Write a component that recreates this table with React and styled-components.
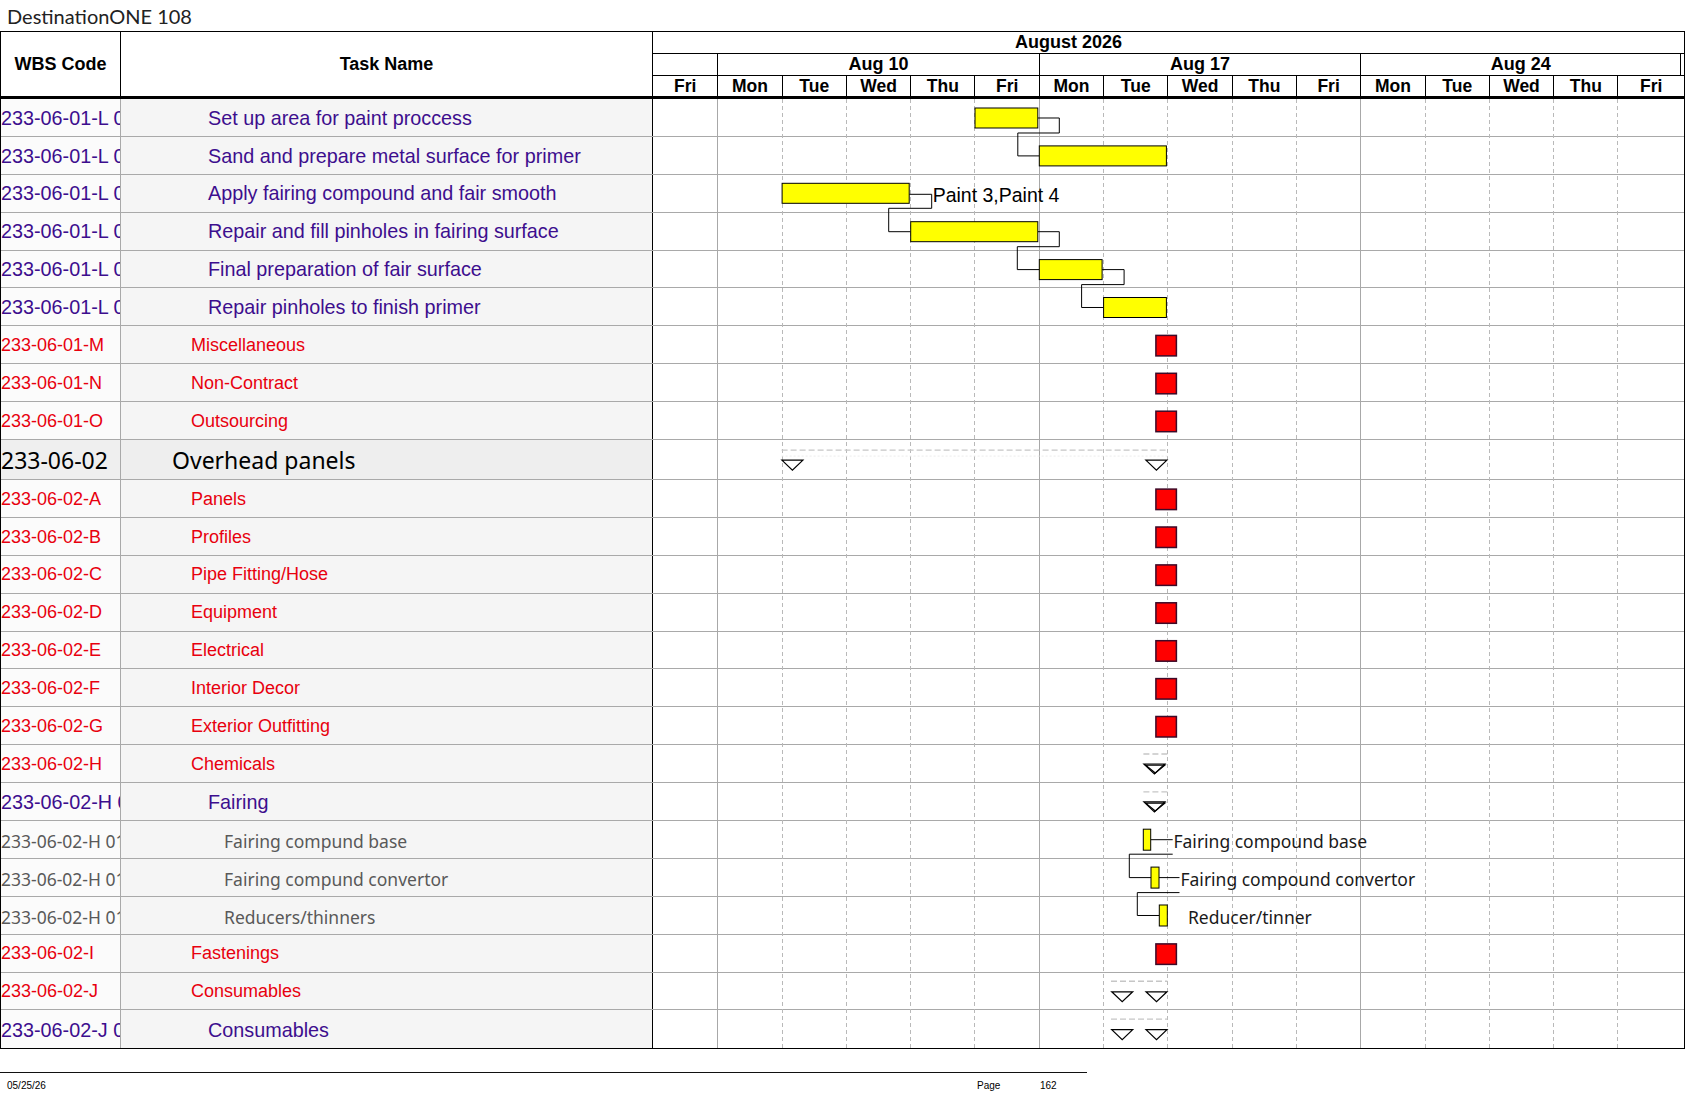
import React from 'react'
import styled, { createGlobalStyle, css } from 'styled-components'

const DW = 64.3
const RH = 37.9
const SUMMARY_H = 40
const CHART_W = 1031

const DAYS = ['Fri', 'Mon', 'Tue', 'Wed', 'Thu', 'Fri', 'Mon', 'Tue', 'Wed', 'Thu', 'Fri', 'Mon', 'Tue', 'Wed', 'Thu', 'Fri']
const WEEKS = [
  { label: '', days: 1 },
  { label: 'Aug 10', days: 5 },
  { label: 'Aug 17', days: 5 },
  { label: 'Aug 24', days: 5 },
]

const ROWS = [
  { wbs: '233-06-01-L 01', name: 'Set up area for paint proccess', kind: 'task' },
  { wbs: '233-06-01-L 02', name: 'Sand and prepare metal surface for primer', kind: 'task' },
  { wbs: '233-06-01-L 03', name: 'Apply fairing compound and fair smooth', kind: 'task' },
  { wbs: '233-06-01-L 04', name: 'Repair and fill pinholes in fairing surface', kind: 'task' },
  { wbs: '233-06-01-L 05', name: 'Final preparation of fair surface', kind: 'task' },
  { wbs: '233-06-01-L 06', name: 'Repair pinholes to finish primer', kind: 'task' },
  { wbs: '233-06-01-M', name: 'Miscellaneous', kind: 'cost' },
  { wbs: '233-06-01-N', name: 'Non-Contract', kind: 'cost' },
  { wbs: '233-06-01-O', name: 'Outsourcing', kind: 'cost' },
  { wbs: '233-06-02', name: 'Overhead panels', kind: 'summary' },
  { wbs: '233-06-02-A', name: 'Panels', kind: 'cost' },
  { wbs: '233-06-02-B', name: 'Profiles', kind: 'cost' },
  { wbs: '233-06-02-C', name: 'Pipe Fitting/Hose', kind: 'cost' },
  { wbs: '233-06-02-D', name: 'Equipment', kind: 'cost' },
  { wbs: '233-06-02-E', name: 'Electrical', kind: 'cost' },
  { wbs: '233-06-02-F', name: 'Interior Decor', kind: 'cost' },
  { wbs: '233-06-02-G', name: 'Exterior Outfitting', kind: 'cost' },
  { wbs: '233-06-02-H', name: 'Chemicals', kind: 'cost' },
  { wbs: '233-06-02-H 01', name: 'Fairing', kind: 'task' },
  { wbs: '233-06-02-H 01.1', name: 'Fairing compund base', kind: 'item' },
  { wbs: '233-06-02-H 01.2', name: 'Fairing compund convertor', kind: 'item' },
  { wbs: '233-06-02-H 01.3', name: 'Reducers/thinners', kind: 'item' },
  { wbs: '233-06-02-I', name: 'Fastenings', kind: 'cost' },
  { wbs: '233-06-02-J', name: 'Consumables', kind: 'cost' },
  { wbs: '233-06-02-J 01', name: 'Consumables', kind: 'task' },
]

// text look of each kind of row
const KIND = {
  task: { color: '#3d0e8e', font: '"Liberation Sans", Arial, sans-serif', size: 19.8, indent: 87, nudge: 1.5 },
  cost: { color: '#e8000e', font: '"Liberation Sans", Arial, sans-serif', size: 18, indent: 70, nudge: 1.5 },
  summary: { color: '#000', font: '"Noto Sans", "Open Sans", sans-serif', size: 23, indent: 51, nudge: 0 },
  item: { color: '#595959', font: '"Noto Sans", "Open Sans", sans-serif', size: 17.5, indent: 103, nudge: 2.5 },
}

const rowHeight = (r) => (r.kind === 'summary' ? SUMMARY_H : RH)
const TOPS = ROWS.reduce((acc, r, i) => {
  acc.push(i === 0 ? 0 : acc[i - 1] + rowHeight(ROWS[i - 1]))
  return acc
}, [])
const BODY_H = TOPS[TOPS.length - 1] + rowHeight(ROWS[ROWS.length - 1])

const d = (i) => i * DW
const COST_ROWS = [6, 7, 8, 10, 11, 12, 13, 14, 15, 16, 22]

const GlobalStyle = createGlobalStyle`
  html, body {
    margin: 0;
    padding: 0;
    background: #fff;
  }
  body {
    font-family: "Liberation Sans", Arial, sans-serif;
    color: #000;
  }
`

const App = () => {
  return (
    <Page>
      <GlobalStyle />
      <Title>DestinationONE 108</Title>
      <Sheet>
        <Header>
          <HeadCell $width={120}>WBS Code</HeadCell>
          <HeadCell $width={532}>Task Name</HeadCell>
          <ChartHead>
            <MonthBand>August 2026</MonthBand>
            <WeekBand>
              {WEEKS.map((w, i) => (
                <WeekCell key={i} $first={i === 0}>
                  {w.label}
                </WeekCell>
              ))}
            </WeekBand>
            <DayBand>
              {DAYS.map((day, i) => (
                <DayCell key={i} $first={i === 0}>
                  {day}
                </DayCell>
              ))}
            </DayBand>
          </ChartHead>
        </Header>

        <Body>
          {ROWS.map((r, i) => (
            <Row key={i} $summary={r.kind === 'summary'}>
              <WbsCell $kind={r.kind}>{r.wbs}</WbsCell>
              <TaskCell $kind={r.kind}>{r.name}</TaskCell>
              <ChartCell />
            </Row>
          ))}

          <ChartOverlay>
            <DayGrid>
              {DAYS.map((day, i) => (
                <DayLine key={i} $first={i === 0} $week={day === 'Mon'} />
              ))}
            </DayGrid>
            <GanttDrawing />
          </ChartOverlay>
        </Body>
      </Sheet>

      <Footer>
        <span>05/25/26</span>
        <span>Page</span>
        <span>162</span>
      </Footer>
    </Page>
  )
}

export default App

/**
 * Gantt drawing
 */

const Bar = ({ x1, x2, y, h = 20 }) => (
  <rect x={x1} y={y} width={x2 - x1} height={h} fill="#ffff00" stroke="#000" strokeWidth="1" />
)

const Milestone = ({ row }) => (
  <rect x={d(8) - 11.5} y={TOPS[row] + 9} width="20.5" height="20.5" fill="#ff0000" stroke="#3d0a28" strokeWidth="1.5" />
)

const Tri = ({ x, y, double }) => (
  <g fill="none" stroke="#000" strokeWidth="1.2">
    <polygon points={`${x},${y} ${x + 21},${y} ${x + 10.5},${y + 10}`} fill="#fff" />
    {double && <polygon points={`${x + 1.8},${y + 1.2} ${x + 21},${y + 1.2} ${x + 11.4},${y + 9}`} />}
  </g>
)

const Dash = ({ x1, x2, y }) => (
  <line x1={x1} x2={x2} y1={y} y2={y} stroke="#c6c6c6" strokeWidth="1.4" strokeDasharray="6 3" />
)

const Link = ({ pts }) => <path d={pts} fill="none" stroke="#000" strokeWidth="1" />

const link = (xa, ya, xDrop, yDown, xLeft, yb, xEnd) =>
  `M${xa} ${ya} H${xDrop} V${yDown} H${xLeft} V${yb} H${xEnd}`

const GanttDrawing = () => {
  const T = TOPS
  return (
    <ChartSvg width={CHART_W} height={BODY_H} viewBox={`0 0 ${CHART_W} ${BODY_H}`}>
      {/* paint tasks */}
      <Link pts={link(d(6) - 1, T[0] + 19, d(6) + 20.5, T[0] + 34, d(6) - 21, T[1] + 19, d(6) + 0.5)} />
      <Link pts={`M${d(4) - 1} ${T[2] + 19.5} H${d(4) + 21.5}`} />
      <Link pts={link(d(4) + 21.5, T[2] + 19.5, d(4) + 21.5, T[2] + 33.5, d(4) - 21.5, T[3] + 19, d(4) + 0.5)} />
      <Link pts={link(d(6) - 1, T[3] + 19, d(6) + 20.5, T[3] + 34, d(6) - 21.5, T[4] + 19, d(6) + 0.5)} />
      <Link pts={link(d(7) - 1, T[4] + 19, d(7) + 21, T[4] + 34, d(7) - 21.5, T[5] + 19, d(7) + 0.5)} />

      <Bar x1={d(5) + 0.5} x2={d(6) - 1} y={T[0] + 9} />
      <Bar x1={d(6) + 0.5} x2={d(8) - 1} y={T[1] + 9} />
      <Bar x1={d(2) + 0.5} x2={d(4) - 1} y={T[2] + 8.5} />
      <Bar x1={d(4) + 0.5} x2={d(6) - 1} y={T[3] + 9} />
      <Bar x1={d(6) + 0.5} x2={d(7) - 1} y={T[4] + 9} />
      <Bar x1={d(7) + 0.5} x2={d(8) - 1} y={T[5] + 9} />
      <PaintLabel x={d(4) + 22.5} y={T[2] + 27.5}>
        Paint 3,Paint 4
      </PaintLabel>

      {COST_ROWS.map((r) => (
        <Milestone key={r} row={r} />
      ))}

      {/* Overhead panels summary */}
      <Dash x1={d(2)} x2={d(8)} y={T[9] + 10} />
      <line x1={d(2)} x2={d(8)} y1={T[9] + 16} y2={T[9] + 16} stroke="#ececec" strokeWidth="1" strokeDasharray="2 2" />
      <Tri x={d(2) + 0.3} y={T[9] + 20} />
      <Tri x={d(8) - 21.5} y={T[9] + 20} />

      {/* Chemicals / Fairing */}
      {[17, 18].map((r) => (
        <g key={r}>
          <Dash x1={d(8) - 24} x2={d(8)} y={T[r] + 8.6} />
          <Tri x={d(8) - 23.5} y={T[r] + 18.6} double />
        </g>
      ))}

      {/* Fairing compound items */}
      <Link pts={`M497.7 ${T[19] + 18.5} H519.7`} />
      <Link pts={`M519.7 ${T[19] + 33} H476.3 V${T[20] + 18.5} H498`} />
      <Link pts={`M506 ${T[20] + 18.5} H526.5`} />
      <Link pts={`M526.5 ${T[20] + 33.5} H484.3 V${T[21] + 18.5} H506.3`} />
      <Bar x1={490.3} x2={497.7} y={T[19] + 8} h={21} />
      <Bar x1={498} x2={506} y={T[20] + 8} h={21} />
      <Bar x1={506.3} x2={514.3} y={T[21] + 8} h={21} />
      <ItemLabel x={520.5} y={T[19] + 27}>
        Fairing compound base
      </ItemLabel>
      <ItemLabel x={527.5} y={T[20] + 27}>
        Fairing compound convertor
      </ItemLabel>
      <ItemLabel x={535} y={T[21] + 27}>
        Reducer/tinner
      </ItemLabel>

      {/* Consumables */}
      {[23, 24].map((r) => (
        <g key={r}>
          <Dash x1={458} x2={d(8)} y={T[r] + 8.4} />
          <Tri x={458.7} y={T[r] + 19} />
          <Tri x={493} y={T[r] + 19} />
        </g>
      ))}
    </ChartSvg>
  )
}

/**
 * Styles
 */

const Page = styled.div`
  width: 1687px;
  min-height: 1097px;
  background: #fff;
`

const Title = styled.div`
  height: 31px;
  display: flex;
  align-items: center;
  padding-left: 7px;
  font-family: 'Lato', 'DejaVu Sans', sans-serif;
  font-weight: 400;
  font-size: 20px;
  color: #222;
`

const Sheet = styled.div`
  width: 1685px;
  box-sizing: border-box;
  border: 1px solid #000;
`

const Header = styled.div`
  display: flex;
  height: 67px;
  box-sizing: border-box;
  border-bottom: 3px solid #000;
`

const HeadCell = styled.div`
  width: ${(p) => p.$width}px;
  flex: none;
  box-sizing: border-box;
  border-right: 1px solid #000;
  display: flex;
  align-items: center;
  justify-content: center;
  font-weight: 700;
  font-size: 18px;
  padding-top: 1px;
`

const ChartHead = styled.div`
  width: ${CHART_W}px;
  display: flex;
  flex-direction: column;
  font-weight: 700;
  font-size: 18px;
`

const MonthBand = styled.div`
  height: 22px;
  box-sizing: border-box;
  border-bottom: 1px solid #000;
  display: flex;
  align-items: center;
  justify-content: center;
  padding-right: 200px;
`

const bandGrid = css`
  display: grid;
  box-sizing: border-box;
`

const WeekBand = styled.div`
  ${bandGrid};
  height: 23px;
  grid-template-columns: ${DW}px ${DW * 5}px ${DW * 5}px 1fr;
  border-bottom: 1px solid #000;
`

const WeekCell = styled.div`
  box-sizing: border-box;
  border-left: ${(p) => (p.$first ? 'none' : '1px solid #000')};
  display: flex;
  align-items: center;
  justify-content: center;
  &:last-child {
    border-right: 1px solid #000;
    margin-right: 3px;
  }
`

const DayBand = styled.div`
  ${bandGrid};
  flex: 1;
  grid-template-columns: repeat(15, ${DW}px) 1fr;
`

const DayCell = styled.div`
  box-sizing: border-box;
  border-left: ${(p) => (p.$first ? 'none' : '1px solid #000')};
  display: flex;
  align-items: center;
  justify-content: center;
  font-size: 17.5px;
`

const Body = styled.div`
  position: relative;
`

const Row = styled.div`
  display: flex;
  height: ${(p) => (p.$summary ? SUMMARY_H : RH)}px;
  box-sizing: border-box;
  border-bottom: 1px solid #a9a9a9;

  &:nth-last-child(2) {
    border-bottom: none;
  }
`

const cellText = css`
  box-sizing: border-box;
  display: flex;
  align-items: center;
  white-space: nowrap;
  overflow: hidden;
  padding-top: ${(p) => KIND[p.$kind].nudge}px;
  color: ${(p) => KIND[p.$kind].color};
  font-family: ${(p) => KIND[p.$kind].font};
  font-size: ${(p) => KIND[p.$kind].size}px;
`

const WbsCell = styled.div`
  ${cellText};
  width: 120px;
  flex: none;
  border-right: 1px solid #a9a9a9;
  background: ${(p) => (p.$kind === 'summary' ? '#efefef' : '#fbfbfb')};
`

const TaskCell = styled.div`
  ${cellText};
  width: 532px;
  flex: none;
  padding-left: ${(p) => KIND[p.$kind].indent}px;
  border-right: 1px solid #000;
  background: ${(p) => (p.$kind === 'summary' ? '#eeeeee' : '#f5f5f5')};
`

const ChartCell = styled.div`
  flex: 1;
  background: #fff;
`

const ChartOverlay = styled.div`
  position: absolute;
  top: 0;
  left: 652px;
  width: ${CHART_W}px;
  bottom: 0;
  pointer-events: none;
`

const DayGrid = styled.div`
  position: absolute;
  inset: 0;
  display: grid;
  grid-template-columns: repeat(15, ${DW}px) 1fr;
`

const DayLine = styled.div`
  ${(p) =>
    !p.$first &&
    (p.$week
      ? css`
          border-left: 1px solid #a8a8a8;
        `
      : css`
          background-image: linear-gradient(to bottom, #b9b9b9 0, #b9b9b9 4px, transparent 4px, transparent 7px);
          background-size: 1px 7px;
          background-repeat: repeat-y;
          background-position: left top;
        `)}
`

const ChartSvg = styled.svg`
  position: absolute;
  top: 0;
  left: 0;
  overflow: visible;
`

const PaintLabel = styled.text`
  font-family: 'Liberation Sans', Arial, sans-serif;
  font-size: 19.5px;
  fill: #000;
`

const ItemLabel = styled.text`
  font-family: 'Noto Sans', 'Open Sans', sans-serif;
  font-size: 17.5px;
  fill: #1a1a1a;
`

const Footer = styled.div`
  width: 1087px;
  margin-top: 23px;
  box-sizing: border-box;
  border-top: 1px solid #111;
  display: grid;
  grid-template-columns: 970px 63px auto;
  padding: 7px 0 0 7px;
  font-family: 'Liberation Sans', Arial, sans-serif;
  font-size: 10px;
  line-height: 12px;
  color: #000;
`
